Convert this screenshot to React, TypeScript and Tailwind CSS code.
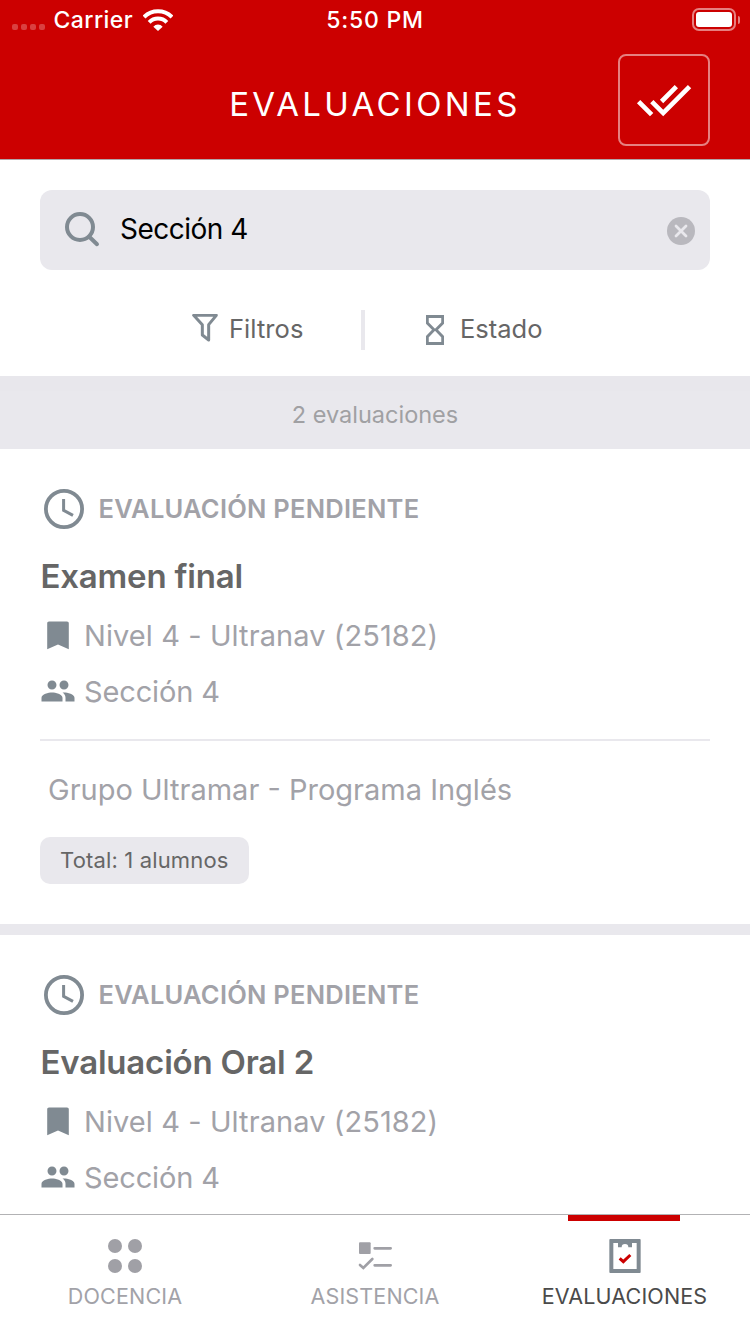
import React from "react";

type Evaluation = {
  title: string;
  level: string;
  section: string;
  group?: string;
  total?: string;
};

const evaluations: Evaluation[] = [
  {
    title: "Examen final",
    level: "Nivel 4 - Ultranav (25182)",
    section: "Sección 4",
    group: "Grupo Ultramar - Programa Inglés",
    total: "Total: 1 alumnos",
  },
  {
    title: "Evaluación Oral 2",
    level: "Nivel 4 - Ultranav (25182)",
    section: "Sección 4",
  },
];

function WifiIcon() {
  return (
    <svg width="30" height="22" viewBox="0 0 90 66" className="ml-[9.5px] mt-px">
      <g fill="none" stroke="#fff" strokeWidth="12">
        <path d="M3 24A60 60 0 0 1 87 24" />
        <path d="M18.5 40A37 37 0 0 1 71.5 40" />
      </g>
      <path d="M45 66L31 53A19 19 0 0 1 59 53Z" fill="#fff" />
    </svg>
  );
}

function StatusBar() {
  return (
    <div className="flex h-[39px] items-center text-[23px] font-medium leading-[39px] text-white">
      <div className="flex flex-1 items-center pl-3">
        <div className="mt-[15px] flex gap-[3px]">
          <i className="h-[6px] w-[6px] rounded-[2px] bg-white/25" />
          <i className="h-[6px] w-[6px] rounded-[2px] bg-white/25" />
          <i className="h-[6px] w-[6px] rounded-[2px] bg-white/25" />
          <i className="h-[6px] w-[6px] rounded-[2px] bg-white/25" />
        </div>
        <span className="ml-[8.5px] pt-[2px] leading-[37px] tracking-[0.45px]">Carrier</span>
        <WifiIcon />
      </div>
      <span className="mr-[2px] pt-[2px] leading-[37px] tracking-[0.75px]">5:50 PM</span>
      <div className="flex flex-1 items-center justify-end pr-[10px]">
        <div className="h-[23px] w-[44px] rounded-[7px] border-2 border-white/50 p-[2px]">
          <div className="h-[15px] w-[36px] rounded-[3px] bg-white" />
        </div>
        <i className="ml-[2px] h-[8px] w-[2px] rounded-r-full bg-white/50" />
      </div>
    </div>
  );
}

function Header() {
  return (
    <header className="h-[160px] shrink-0 border-b border-[#b2a6a9] bg-[#cc0000]">
      <StatusBar />
      <div className="grid h-[120px] grid-cols-[1fr_auto_1fr] items-start px-10 pt-[15px]">
        <span />
        <h1 className="mt-[30px] text-[33px] font-normal leading-[40px] tracking-[3.35px] text-white">
          EVALUACIONES
        </h1>
        <button className="flex h-[92px] w-[92px] items-center justify-center justify-self-end rounded-[8px] border-2 border-white/50">
          <svg width="56" height="56" viewBox="0 0 24 24" fill="#fff" className="shrink-0">
            <path d="M18 7l-1.41-1.41-6.34 6.34 1.41 1.41L18 7zm4.24-1.41L11.66 16.17 7.48 12l-1.41 1.41L11.66 19l12-12-1.42-1.41zM.41 13.41L6 19l1.41-1.41L1.83 12 .41 13.41z" />
          </svg>
        </button>
      </div>
    </header>
  );
}

function SearchBar() {
  return (
    <div className="mx-10 mt-[30px] flex h-20 shrink-0 items-center rounded-[12px] bg-[#e9e8ed] pl-[24px] pr-[15px]">
      <svg width="36" height="36" viewBox="0 0 36 36" fill="none" stroke="#808a92" strokeWidth="4">
        <circle cx="16" cy="15" r="13" />
        <path d="M25.5 25L33 32.2" strokeLinecap="round" />
      </svg>
      <span className="ml-[20px] flex-1 pb-[1px] text-[28px] leading-[79px] tracking-[-0.5px] text-black">
        Sección 4
      </span>
      <svg width="28" height="28" viewBox="0 0 28 28" className="mt-[2px]">
        <circle cx="14" cy="14" r="14" fill="#b9b8be" />
        <path d="M9 9L19 19M19 9L9 19" stroke="#e9e8ed" strokeWidth="2.8" strokeLinecap="round" />
      </svg>
    </div>
  );
}

function Filters() {
  return (
    <div className="flex h-[106px] shrink-0 pt-[40px] text-[25.5px] leading-[38px] text-[#666]">
      <div className="flex w-[361px] pl-[192px]">
        <svg width="26" height="28" viewBox="0 0 78 84" className="mt-[4px]">
          <path
            d="M5 4H73L50 32V78L31 63V32Z"
            fill="none"
            stroke="#808a92"
            strokeWidth="9"
            strokeLinejoin="round"
          />
        </svg>
        <span className="ml-[11px] tracking-[0.05px]">Filtros</span>
      </div>
      <div className="h-10 w-1 bg-[#e9e8ed]" />
      <div className="flex pl-[61px]">
        <svg width="18" height="30" viewBox="0 0 54 90" className="mt-[5px]">
          <path
            d="M4 4.5H50V24L30 44.5L50 65V85.5H4V65L24 44.5L4 24Z"
            fill="none"
            stroke="#808a92"
            strokeWidth="8.5"
          />
        </svg>
        <span className="ml-[16px]">Estado</span>
      </div>
    </div>
  );
}

function EvaluationCard({ item }: { item: Evaluation }) {
  return (
    <article className="h-[486px] shrink-0 border-b-[11px] border-[#e9e8ed] px-10 pt-[39px]">
      <div className="flex h-[42px] items-center">
        <svg width="40" height="40" viewBox="0 0 40 40" fill="none" stroke="#808a92" className="ml-[4px]">
          <circle cx="20" cy="20" r="18.1" strokeWidth="3.8" />
          <path d="M19.6 10V21.3L29 26.4" strokeWidth="3" />
        </svg>
        <span className="ml-[14.5px] text-[25.5px] font-semibold leading-[42px] tracking-[0.25px] text-[#a2a2a8]">
          EVALUACIÓN PENDIENTE
        </span>
      </div>
      <h2 className="mt-[24px] pl-[0.5px] text-[33px] font-semibold leading-[44px] tracking-[-0.2px] text-[#666]">
        {item.title}
      </h2>
      <div className="mt-[10px] flex h-[56px] items-center text-[29px] text-[#a2a2a8]">
        <svg width="36" height="36" viewBox="0 0 24 24" fill="#808a92" className="-mt-[2px]">
          <path d="M18 3H6c-.7 0-1.2.5-1.2 1.2V21.5l7.2-3.2 7.2 3.2V4.2C19.2 3.5 18.7 3 18 3z" />
        </svg>
        <span className="ml-[8px] leading-[56px] tracking-[0.08px]">{item.level}</span>
      </div>
      <div className="flex h-[56px] items-center text-[29px] text-[#a2a2a8]">
        <svg width="36" height="36" viewBox="0 0 24 24" fill="#808a92" className="-mt-[2px]">
          <path d="M16 11c1.66 0 2.99-1.34 2.99-3S17.66 5 16 5c-1.66 0-3 1.34-3 3s1.34 3 3 3zm-8 0c1.66 0 2.99-1.34 2.99-3S9.66 5 8 5C6.34 5 5 6.34 5 8s1.34 3 3 3zm0 2c-2.33 0-7 1.17-7 3.5V19h14v-2.5c0-2.33-4.67-3.5-7-3.5zm8 0c-.29 0-.62.02-.97.05 1.16.84 1.97 1.97 1.97 3.45V19h6v-2.5c0-2.33-4.67-3.5-7-3.5z" />
        </svg>
        <span className="ml-[8px] leading-[56px] tracking-[-0.15px]">{item.section}</span>
      </div>
      {item.group && (
        <p className="mt-[19px] border-t-2 border-[#e9e8ed] pl-[8px] pt-[29px] text-[29px] leading-[40px] text-[#a2a2a8]">
          {item.group}
        </p>
      )}
      {item.total && (
        <span className="mt-[27px] flex h-[47px] w-[209px] items-center rounded-[10px] bg-[#e9e8ed] pl-[20px] text-[22px] tracking-[0.15px] text-[#666]">
          {item.total}
        </span>
      )}
    </article>
  );
}

function TabBar() {
  return (
    <nav className="grid h-[120px] shrink-0 grid-cols-3 border-t border-[#b2b2b4] bg-white text-[21.5px] leading-[30px] tracking-[0.15px] text-[#a2a2a8]">
      <div className="flex flex-col items-center pt-[24px]">
        <svg width="34" height="34" viewBox="0 0 34 34" fill="#a0a0a6">
          <circle cx="7" cy="7" r="7" />
          <circle cx="27" cy="7" r="7" />
          <circle cx="7" cy="27" r="7" />
          <circle cx="27" cy="27" r="7" />
        </svg>
        <span className="mt-[8px]">DOCENCIA</span>
      </div>
      <div className="flex flex-col items-center pt-[24px]">
        <svg width="34" height="34" viewBox="0 0 102 102" fill="none" stroke="#a0a0a6" strokeLinecap="round">
          <rect x="3" y="10" width="35" height="35" rx="3" fill="#a0a0a6" stroke="none" />
          <path d="M50 28H98M50 79H98" strokeWidth="8" />
          <path d="M6 78L16 87L43 60" strokeWidth="8" />
        </svg>
        <span className="mt-[8px]">ASISTENCIA</span>
      </div>
      <div className="flex flex-col items-center text-[#4a4a4a]">
        <div className="mr-[2px] h-[6px] w-[112px] bg-[#cc0000]" />
        <svg width="32" height="34" viewBox="0 0 96 102" className="mt-[18px]" fill="none">
          <rect x="1" y="0" width="94" height="102" rx="3" fill="#808a92" />
          <path d="M13 12H27V25H38A10 10 0 0 1 58 25H69V12H83V90H13Z" fill="#fff" />
          <path d="M32 58L43 68L64 48" stroke="#cc0000" strokeWidth="9" />
        </svg>
        <span className="mr-px mt-[8px]">EVALUACIONES</span>
      </div>
    </nav>
  );
}

export default function App() {
  return (
    <div className="flex h-[1334px] w-[750px] flex-col overflow-hidden bg-white font-['Inter','Liberation_Sans',sans-serif]">
      <Header />
      <SearchBar />
      <Filters />
      <div className="flex h-[73px] shrink-0 justify-center border-t-[15px] border-[#e8e7ec] bg-[#e9e8ed] pt-[4px] text-[23.5px] leading-[40px] text-[#a0a0a3]">
        2 evaluaciones
      </div>
      <main className="flex min-h-0 flex-1 flex-col overflow-hidden">
        {evaluations.map((item) => (
          <EvaluationCard key={item.title} item={item} />
        ))}
      </main>
      <TabBar />
    </div>
  );
}
